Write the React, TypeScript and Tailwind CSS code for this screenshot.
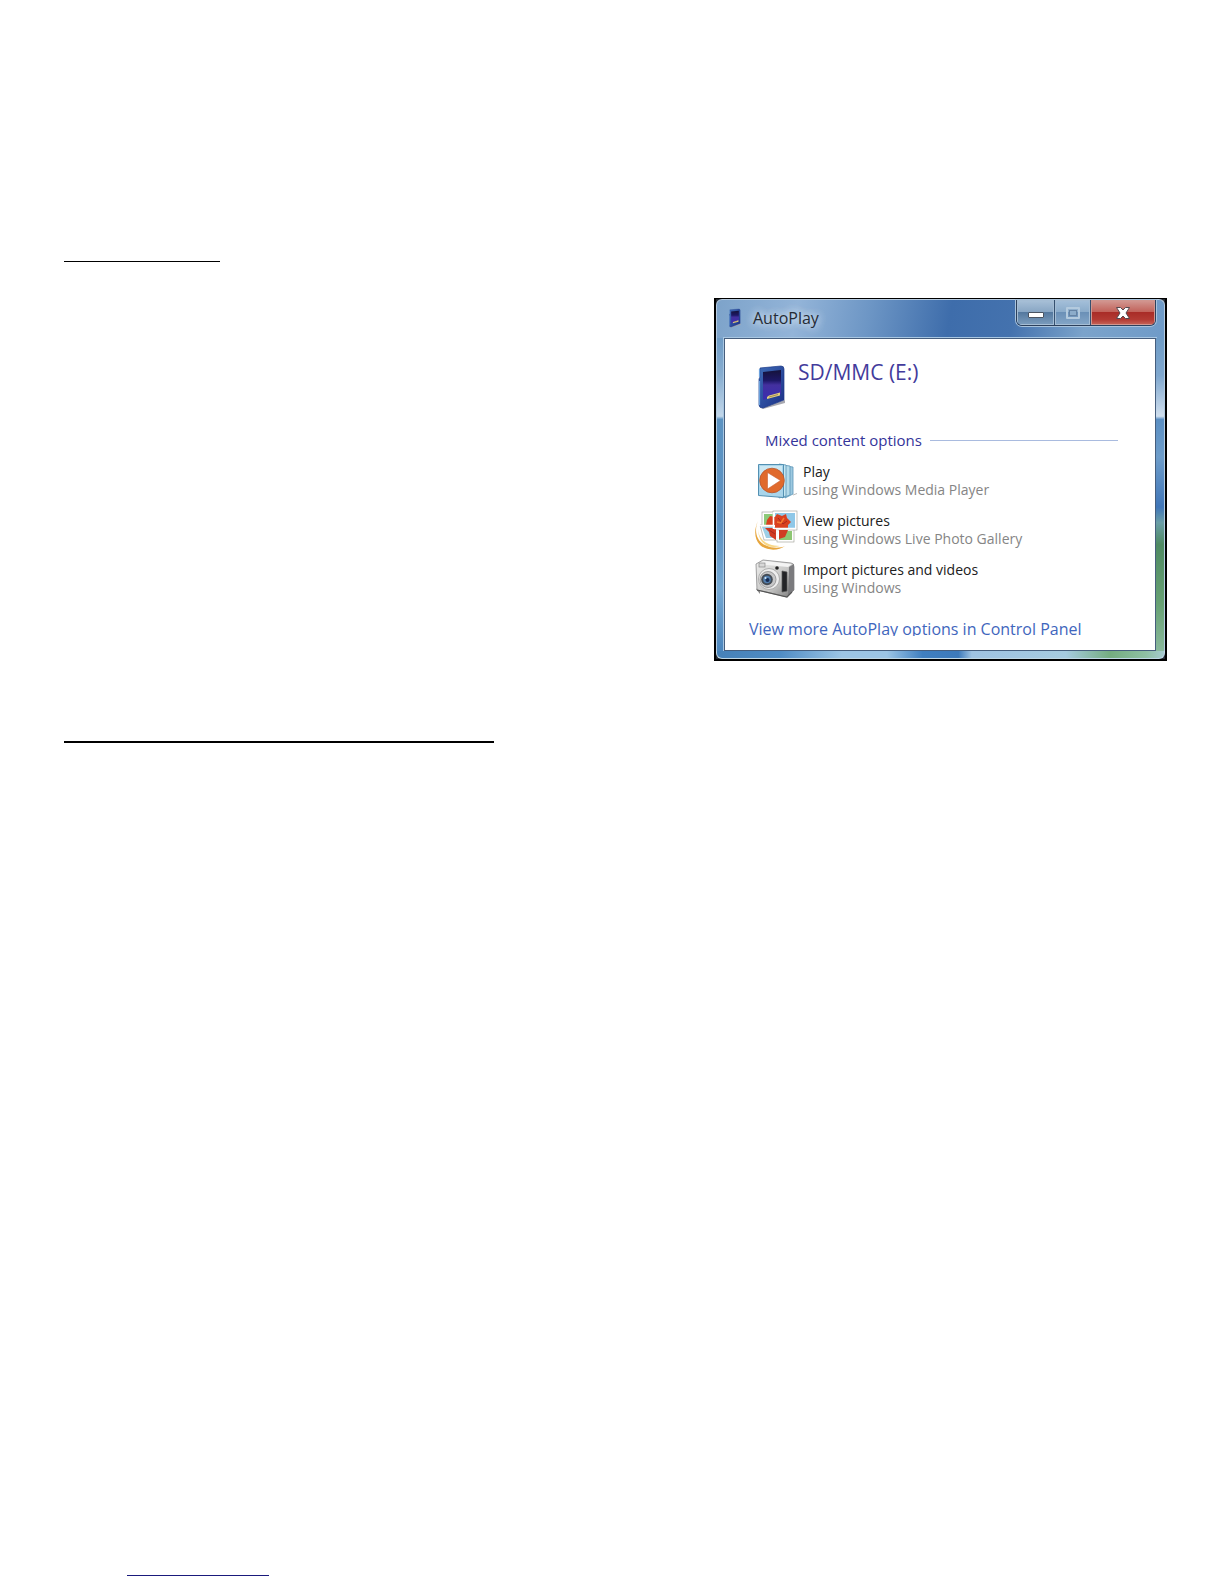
import type { ReactNode } from "react";

const CardIcon = ({ className }: { className: string }) => (
    <svg viewBox="0 0 28 44" className={className} aria-hidden="true">
        <defs>
            <linearGradient id="cardLabel" x1="0" y1="0" x2="0" y2="1">
                <stop offset="0" stopColor="#15123a" />
                <stop offset="0.35" stopColor="#1d1866" />
                <stop offset="0.5" stopColor="#43309f" />
                <stop offset="1" stopColor="#3a2db0" />
            </linearGradient>
            <linearGradient id="cardBody" x1="0" y1="0" x2="1" y2="1">
                <stop offset="0" stopColor="#3e6cb8" />
                <stop offset="1" stopColor="#1b2f86" />
            </linearGradient>
        </defs>
        <path d="M3 43 L27 35 V38 L5 44Z" fill="#a9a9b0" />
        <path d="M2 3 L23 1 Q26 1 26 4 L26 35 L5 43 Q1 43 1 40 V14 L2 12Z" fill="url(#cardBody)" stroke="#1d3a86" strokeWidth="0.7" />
        <path d="M1.5 4 V12 M1.5 16 V40" stroke="#6aa0dc" strokeWidth="1.2" />
        <path d="M5 7 L23 5 V29 L5 35Z" fill="url(#cardLabel)" />
        <path d="M9 32 L11 30.5 L13 30 L22 27.500 V30.5 L9 34Z" fill="#e3cf80" />
        <path d="M11 32 L20 29.5" stroke="#8a7440" strokeWidth="0.7" />
    </svg>
);

const PlayIcon = () => (
    <svg viewBox="0 0 44 38" className="w-11 shrink-0" aria-hidden="true">
        <path d="M30 4 L38 5 V32 L30 36Z" fill="#9dc9e0" stroke="#5b96b8" strokeWidth="0.8" />
        <path d="M27 3 L35 4 V33 L27 36Z" fill="#b4dbea" stroke="#5b96b8" strokeWidth="0.8" />
        <path d="M24 2 L31 3 V34 L24 36Z" fill="#c5e7f1" stroke="#5b96b8" strokeWidth="0.8" />
        <path d="M3.5 2.5 H28.5 V35.5 L3.5 33.5Z" fill="#a9d5eb" stroke="#5390b2" />
        <path d="M5 4 H27 V16 L5 26Z" fill="#cce8f3" />
        <path d="M38 33 L42 31.5" stroke="#bbb" />
        <circle cx="17" cy="18.5" r="12.3" fill="#e06a2c" stroke="#b8572e" strokeWidth="0.8" />
        <path d="M12.5 10.5 L25.5 18.5 L12.5 27Z" fill="#fff" stroke="#c76032" strokeWidth="0.6" />
    </svg>
);

const GalleryIcon = () => (
    <svg viewBox="0 0 44 40" className="w-11 shrink-0" aria-hidden="true">
        <path d="M3 11 C-1 20 1 31 10 35 C18 39 26 38 30 36 C24 41 11 41 5 35 C-1 29 -1 19 3 11Z" fill="#e7a63e" />
        <path d="M3 15 C2 29 11 36 25 36 C14 39 2 35 3 15Z" fill="#f8d786" />
        <g stroke="#9a9a92" strokeWidth="0.6" fill="#fff">
            <path d="M5 15 H23 V30 H9Z" />
            <rect x="22" y="19" width="17" height="13" />
            <rect x="7" y="2" width="16" height="14" />
            <rect x="18" y="1" width="24" height="19" />
        </g>
        <rect x="9" y="4" width="10" height="11" fill="#8cc978" />
        <rect x="20" y="3" width="20" height="15" fill="#8fc8e8" />
        <rect x="24" y="21" width="13" height="9" fill="#8dc673" />
        <path d="M7 17 H21 V28 H11Z" fill="#9dcfe6" />
        <path d="M12 10 L15 6 L20 7 L22 4 L27 6 L31 4 L32 8 L36 12 L33 15 L33 18 H20 V15 H11Z" fill="#d9401f" />
        <path d="M10 18 H21 V30 L15 26 L14 22Z M24 20 H33 L30 27 L24 29Z" fill="#d13a22" />
        <path d="M23 8 L28 14 L32 11 M14 20 L20 24" stroke="#a52a1e" fill="none" />
        <path d="M26 13 L29 8 M26 13 L22 12" stroke="#f47a31" strokeWidth="1.5" />
        <path d="M18.500 2 V19 M19 18.500 H41 M4 15.500 H19 M22 20 V30" stroke="#fff" strokeWidth="1.6" />
    </svg>
);

const CameraIcon = () => (
    <svg viewBox="0 0 44 40" className="w-11 shrink-0" aria-hidden="true">
        <defs>
            <linearGradient id="cameraBody" x1="0" y1="0" x2="1" y2="1">
                <stop offset="0" stopColor="#f0f0ef" />
                <stop offset="0.6" stopColor="#c3c3c2" />
                <stop offset="1" stopColor="#777" />
            </linearGradient>
        </defs>
        <path d="M1 30 L5 28 V35Z" fill="#888" />
        <path d="M1 5 L8 1 L36 4 Q39 4 39 8 V31 L32 38 L2 31Z" fill="url(#cameraBody)" stroke="#8a8a8c" strokeWidth="0.8" />
        <path d="M3 5 L9 2 L37 5 L33 8Z" fill="#f4f4f4" />
        <path d="M34 8 L39 5 V31 L33 37Z" fill="#7b7b7e" />
        <rect x="4" y="4" width="6" height="4" fill="#d8d8d8" stroke="#8a8a8a" strokeWidth="0.7" />
        <circle cx="22" cy="9" r="1.800" fill="#222" />
        <path d="M27 12 L32 13 V32 L27 33Z" fill="#232427" stroke="#555" strokeWidth="0.7" />
        <circle cx="14" cy="20" r="10.500" fill="#ededed" stroke="#a0a0a0" strokeWidth="0.8" />
        <circle cx="13" cy="20.500" r="8" fill="#c7c7c8" stroke="#8a8a8a" strokeWidth="0.8" />
        <circle cx="12" cy="20.500" r="5.800" fill="#444c55" />
        <circle cx="12" cy="20.500" r="3.800" fill="#527eae" />
        <circle cx="12.500" cy="21" r="2" fill="#172c53" />
        <circle cx="10.500" cy="19" r="1" fill="#d9edfa" />
        <path d="M2 31 L32 38 L37 33" stroke="#555" strokeWidth="1.200" fill="none" />
    </svg>
);

const options: { title: string; detail: string; icon: ReactNode }[] = [
    { title: "Play", detail: "using Windows Media Player", icon: <PlayIcon /> },
    { title: "View pictures", detail: "using Windows Live Photo Gallery", icon: <GalleryIcon /> },
    { title: "Import pictures and videos", detail: "using Windows", icon: <CameraIcon /> },
];

const TitleBar = () => (
    <header className="flex h-[39px] items-start justify-between rounded-t-md border-t border-x border-[#b6cbe0] bg-[linear-gradient(100deg,#7da3ca_0%,#93b4d8_18%,#6d96c5_34%,#3e6dab_52%,#4472ae_66%,#7ba3cb_82%,#6f9bc8_100%)] pl-3 pr-2">
        <div className="flex h-9 items-center gap-3">
            <CardIcon className="h-5 w-3" />
            <h1 className="text-base text-[#252b35] [text-shadow:0_0_8px_#dce8f4,0_0_8px_#dce8f4]">AutoPlay</h1>
        </div>
        <div className="flex h-[26px] overflow-hidden rounded-b-md border border-t-0 border-[#2c405c] shadow-[0_0_0_1px_#a9c3dc]">
            <button aria-label="Minimize" className="flex w-[38px] items-center justify-center border-r border-[#35506f] bg-[linear-gradient(#a9c1d8_0%,#88a6c4_48%,#55799f_50%,#7c9dbe_100%)] pt-1 shadow-[inset_0_0_0_1px_#a5bdd4]">
                <span className="h-[6px] w-4 rounded-[1px] border border-[#4a5462] bg-white" />
            </button>
            <button aria-label="Maximize" disabled className="flex w-9 items-center justify-center border-r border-[#35506f] bg-[linear-gradient(#a5c0da_0%,#8aabca_48%,#6b90b7_50%,#84a6c7_100%)] shadow-[inset_0_0_0_1px_#a5bdd4]">
                <span className="flex h-3 w-[14px] items-center justify-center rounded-[1px] border-2 border-[#b3cade]">
                    <span className="h-[6px] w-2 border border-[#6583a4] bg-[#8cacca]" />
                </span>
            </button>
            <button aria-label="Close" className="flex w-16 items-center justify-center bg-[linear-gradient(#d39a94_0%,#c2645c_46%,#a92c27_50%,#b33a33_78%,#c7665a_100%)] shadow-[inset_0_0_0_1px_#d0968f]">
                <svg viewBox="0 0 16 14" className="w-4" aria-hidden="true">
                    <path d="M1.500 1.500 H5.500 L8 4 L10.500 1.500 H14.500 L11 7 L14.500 12.500 H10.500 L8 10 L5.500 12.500 H1.500 L5 7Z" fill="#fff" stroke="#55494f" />
                </svg>
            </button>
        </div>
    </header>
);

const AutoPlayWindow = () => (
    <section className="flex w-[453px] flex-col border-2 border-t border-black bg-[#242a33] font-['Open_Sans','Noto_Sans',sans-serif]">
        <TitleBar />
        <div className="flex">
            <div className="w-2 border-l border-[#b5cce1] bg-[linear-gradient(#6f9cc6_0%,#88aed1_12%,#c2d7ea_25%,#5c93c2_26%,#5b93c5_60%,#74a8d3_80%,#4c86bd_100%)]" />
            <div className="flex-1 border border-[#465e7d] bg-white pt-[25px] pb-[14px] shadow-[0_0_0_1px_#a9c7e2]">
                <div className="flex gap-3 pl-[33px]">
                    <CardIcon className="h-[46px] w-7" />
                    <h2 className="text-[21px] leading-4 text-[#433b9c]">SD/MMC (E:)</h2>
                </div>
                <div className="mt-[18px] flex items-center gap-2 pl-10 pr-[37px]">
                    <h3 className="text-[15px] leading-6 whitespace-nowrap text-[#34349a]">Mixed content options</h3>
                    <div className="h-px flex-1 bg-[#a9bbdf]" />
                </div>
                <ul className="mt-[11px] flex flex-col gap-[13px] pl-[30px]">
                    {options.map((option) => (
                        <li key={option.title}>
                            <button className="flex h-9 items-center gap-1 text-left text-sm leading-[18px] whitespace-nowrap">
                                {option.icon}
                                <span>
                                    <span className="block text-[#202020]">{option.title}</span>
                                    <span className="block text-[#858585]">{option.detail}</span>
                                </span>
                            </button>
                        </li>
                    ))}
                </ul>
                <a href="#" className="mt-[22px] ml-6 block h-[17px] overflow-hidden text-base leading-5 whitespace-nowrap text-[#3f66bd]">
                    View more AutoPlay options in Control Panel
                </a>
            </div>
            <div className="w-[9px] border-r border-[#b5cce1] bg-[linear-gradient(#6f9cc6_0%,#7fa7ce_12%,#d0dfee_25%,#5b8fc3_26%,#6e9dca_38%,#4076b8_54%,#6a9ea6_59%,#4e8a62_66%,#67a174_85%,#89b99c_100%)]" />
        </div>
        <div className="h-2 rounded-b-md border-x border-b border-[#c1d8e6] bg-[linear-gradient(90deg,#4681b8_0%,#4f8cc4_14%,#9cc5e5_28%,#9cc5e5_38%,#3f7fc0_46%,#3d7abb_54%,#9fc3e2_57%,#a6cbe0_78%,#74ad80_88%,#8fc0a4_96%,#a6cbd0_100%)]" />
    </section>
);

export default function App() {
    return (
        <main className="flex min-h-screen flex-col bg-white pt-[261px] pr-[57px] pb-2 pl-16">
            <hr className="w-[156px] border-t border-black" />
            <div className="mt-9 flex justify-end">
                <AutoPlayWindow />
            </div>
            <hr className="mt-20 w-[430px] border-t-2 border-black" />
            <hr className="mt-auto ml-[63px] w-[142px] border-t border-[#1a1a7c]" />
        </main>
    );
}
